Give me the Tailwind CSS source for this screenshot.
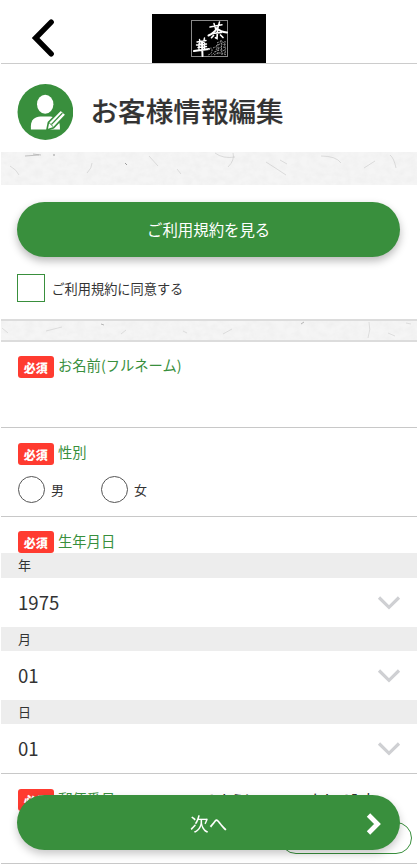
<!DOCTYPE html>
<html lang="ja">
<head>
<meta charset="utf-8">
<title>お客様情報編集</title>
<script src="https://cdn.jsdelivr.net/npm/@tailwindcss/browser@4"></script>
</head>
<body class="bg-white h-[865px] overflow-hidden pl-px text-[#333] font-['Noto_Sans_CJK_JP',sans-serif]">
<svg class="hidden">
  <defs>
    <filter id="grain" x="0" y="0" width="100%" height="100%">
      <feTurbulence type="fractalNoise" baseFrequency=".12 .16" numOctaves="3" seed="4"/>
      <feColorMatrix values="0 0 0 0 .5  0 0 0 0 .5  0 0 0 0 .5  .08 0 0 0 -.025"/>
    </filter>
  </defs>
</svg>

<header class="h-16 border-b border-[#ccc] flex">
  <button class="w-[151px] pl-[29px] pt-[18px] flex items-start" aria-label="戻る">
    <svg width="26" height="40" viewBox="0 0 26 40" fill="none" stroke="#000" stroke-width="5.400" stroke-linecap="round" stroke-linejoin="miter"><path d="M21.200 4.200 5.600 20l15.600 15.800"/></svg>
  </button>
  <div class="mt-3.5 w-[114px] h-[49px] bg-black">
    <svg width="114" height="49" viewBox="0 0 114 49">
      <rect x="39.500" y="6.500" width="36" height="36" fill="none" stroke="#8a8a8a"/>
      <g fill="none" stroke="#fff" stroke-linecap="round">
        <path stroke-width="1.500" d="m58 13 12-2.200M62 9.500l1.500 5M67.500 8l-1.500 5.500"/>
        <path stroke-width="2" d="M65 14c-2 4-5 6-8.500 7.500M65 14.500c3 3 6 3.500 10 4"/>
        <path stroke-width="1.700" d="m60.500 19.500 9-1M65.500 16.500l-.5 8-1.500-.8M61.500 21.500l-2 2.200M68.500 21l2.500 2.500"/>
        <path stroke-width="1.400" d="m45 28 9-1.500M47.500 25.500l.5 4M52.500 24l-1 4.500M44.500 31l10-1M46 33.500l8.500-1M47 29.500v6M52.500 29v6"/>
        <path stroke-width="2" d="m42 37 15-2M50 28l.5 14"/>
      </g>
      <g fill="none" stroke="#aaa" stroke-width="1" stroke-dasharray="1.600 1.100">
        <path d="M56 36q4-4 4 0t-4 5M61 34q6-3 3 2t-5 5M65 29q5-3 8 1M64 32q5-4 10 0M66 35q5-4 8 0M63 38q6-4 11 0M62 41q6-4 12 0M69 26l1 15M73 27v14M66 30v11"/>
      </g>
    </svg>
  </div>
</header>

<section class="h-[88px] flex items-center pl-4">
  <svg class="mt-[8px]" width="56" height="56" viewBox="-.4 0 56 56">
    <circle cx="28" cy="28" r="27.900" fill="#398f3d"/>
    <ellipse cx="27.800" cy="20.300" rx="8.200" ry="9.500" fill="#fff"/>
    <path d="M13.500 45.500v-3.500C13.500 36 17.500 32.500 23 32.500h10c4 0 9.500 3.500 9.500 10v3z" fill="#fff"/>
    <path d="m29.500 46 1.500-7.500L43.300 26l5.200 4.700-12.300 13.100z" fill="#fff" stroke="#398f3d" stroke-width="1.600"/>
    <path d="M34 40.500 45 29" stroke="#398f3d" stroke-width="1.100" fill="none"/>
    <path d="m31.500 38.500 4.500 4.400" stroke="#398f3d" stroke-width="1" fill="none"/>
  </svg>
  <h1 class="ml-[17.500px] mt-[4px] text-[27.600px] leading-10 font-medium whitespace-nowrap [-webkit-text-stroke:0.200px_#333]">お客様情報編集</h1>
</section>

<div class="h-[33px] bg-[#f5f5f5]">
  <svg class="block" width="416" height="33" fill="none" stroke="#bbb" stroke-width=".7">
    <rect width="416" height="33" filter="url(#grain)" stroke="none"/>
    <path d="m24 4 14-1M32 2l8 1" stroke="#aaa"/><path d="m52 3 2 0M124 11l2 2" stroke="#777"/>
    <path d="M214 1q8 6 20 4m-2-4q2 7-5 14M9 14q7 4 9 9M86 21q5-5 5-10M176 17l4 5M265 10q11 7 20 13M279 8l7 4M320 4q15 0 20 7M363 16l11-7M389 3q4 3 6 13M148 4l9 10" opacity=".65"/>
  </svg>
</div>

<section class="h-[134px] pt-[17px] pl-[16.400px]">
  <button class="w-[382.500px] h-[55px] rounded-full bg-[#398f3d] text-white text-[15.400px] flex items-center justify-center shadow-[0_4px_9px_rgba(0,0,0,0.28)]">ご利用規約を見る</button>
  <label class="mt-[17px] flex items-center h-7">
    <span class="w-7 h-7 border border-[#398f3d]"></span>
    <span class="ml-[6px] mt-[1px] text-[13.200px]">ご利用規約に同意する</span>
  </label>
</section>

<div class="h-[23px] border-y-2 border-[#dcdcdc] bg-[#f5f5f5]">
  <svg class="block" width="416" height="19" fill="none" stroke="#bbb" stroke-width=".7">
    <rect width="416" height="19" filter="url(#grain)" stroke="none"/>
    <path d="m100 3 3 1M300 3l3-2" stroke="#999"/><path d="M368 1q2 7-1 16M45 10l16-4M120 13l5-4M222 13l9-5M1 7l6 5M182 10l4 2M387 12l7 3M405 2l5 1" opacity=".6"/>
  </svg>
</div>

<section class="h-[86px] border-b border-[#c8c8c8] pt-[14px] pl-[16.500px]">
  <div class="flex items-start">
    <span class="w-[36.500px] h-[22px] mr-[4px] rounded-[3px] bg-[#ff3b30] text-white text-[12px] leading-[23px] font-black text-center">必須</span>
    <span class="text-[14.300px] leading-[18px] text-[#398f3d]">お名前(フルネーム)</span>
  </div>
</section>

<section class="h-[89px] border-b border-[#c8c8c8] pt-[14.500px] pl-[16.500px]">
  <div class="flex items-start">
    <span class="w-[36.500px] h-[22px] mr-[4px] rounded-[3px] bg-[#ff3b30] text-white text-[12px] leading-[23px] font-black text-center">必須</span>
    <span class="text-[14.300px] leading-[18px] text-[#398f3d]">性別</span>
  </div>
  <div class="mt-[11px] flex h-[27px] text-[13px] leading-[28px]">
    <span class="w-[27px] h-[27px] rounded-full border border-[#555]"></span><span class="ml-[6.500px] w-[49.500px]">男</span>
    <span class="w-[27px] h-[27px] rounded-full border border-[#555]"></span><span class="ml-[6.500px]">女</span>
  </div>
</section>

<section class="border-b border-[#c8c8c8] pt-[14px]">
  <div class="flex items-start pl-[16.500px]">
    <span class="w-[36.500px] h-[22px] mr-[4px] rounded-[3px] bg-[#ff3b30] text-white text-[12px] leading-[23px] font-black text-center">必須</span>
    <span class="text-[14.300px] leading-5 text-[#398f3d]">生年月日</span>
  </div>
  <div class="h-[25px] bg-[#ededed] pl-[17px] text-[13px] leading-[24px]">年</div>
  <div class="h-[49px] pl-[17px] pr-4 flex items-center justify-between text-[18.600px]"><span class="-mt-0.5">1975</span><svg width="24" height="16" viewBox="0 0 24 16" fill="none" stroke="#cfd0d3" stroke-width="3.200"><path d="m2 2.500 10 9.800 10-9.800"/></svg></div>
  <div class="h-6 bg-[#ededed] pl-[17px] text-[13px] leading-6">月</div>
  <div class="h-[49px] pl-[17px] pr-4 flex items-center justify-between text-[18.600px]"><span class="-mt-0.5">01</span><svg width="24" height="16" viewBox="0 0 24 16" fill="none" stroke="#cfd0d3" stroke-width="3.200"><path d="m2 2.500 10 9.800 10-9.800"/></svg></div>
  <div class="h-6 bg-[#ededed] pl-[17px] text-[13px] leading-6">日</div>
  <div class="h-[49px] pl-[17px] pr-4 flex items-center justify-between text-[18.600px]"><span class="-mt-0.5">01</span><svg width="24" height="16" viewBox="0 0 24 16" fill="none" stroke="#cfd0d3" stroke-width="3.200"><path d="m2 2.500 10 9.800 10-9.800"/></svg></div>
</section>

<section class="h-[90px] border-b border-[#c8c8c8] pt-[15px] pl-[16.500px] pr-[5.500px]">
  <div class="flex items-start h-[33px]">
    <span class="w-[36.500px] h-[22px] mr-[4px] rounded-[3px] bg-[#ff3b30] text-white text-[12px] leading-[23px] font-black text-center">必須</span>
    <span class="w-[94px] text-[14.300px] leading-[19px] text-[#398f3d]">郵便番号</span>
    <span class="text-[13.200px] leading-[21px] font-medium whitespace-nowrap">1234567のようにハイフンなしで入力</span>
  </div>
  <div class="ml-auto w-[132px] h-8 rounded-full border border-[#398f3d]"></div>
</section>

<button class="fixed left-[17.400px] top-[795px] w-[382.500px] h-[55px] rounded-full bg-[#398f3d] text-white text-[18.600px] flex items-center justify-center shadow-[0_4px_8px_rgba(0,0,0,0.22)]">次へ
  <svg class="absolute right-[18px] top-[18px]" width="16" height="22" viewBox="0 0 16 22" fill="none" stroke="#fff" stroke-width="4.800"><path d="m2.500 2 9 9-9 9"/></svg>
</button>
</body>
</html>
